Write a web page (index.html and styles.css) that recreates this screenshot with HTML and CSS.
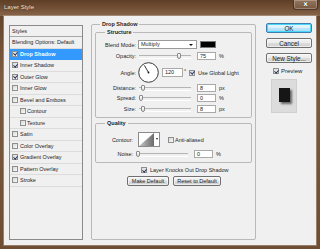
FILE: index.html
```html
<!DOCTYPE html>
<html>
<head>
<meta charset="utf-8">
<title>Layer Style</title>
<link rel="stylesheet" href="styles.css">
</head>
<body>
<div class="window">
  <div class="titlebar">
    <span class="title">Layer Style</span>
    <span class="close">x</span>
  </div>
  <div class="client">
    <div class="list">
      <div class="lhead">Styles</div>
      <div class="row">Blending Options: Default</div>
      <div class="row sel"><span class="cb on"></span>Drop Shadow</div>
      <div class="row"><span class="cb on"></span>Inner Shadow</div>
      <div class="row"><span class="cb on"></span>Outer Glow</div>
      <div class="row"><span class="cb"></span>Inner Glow</div>
      <div class="row"><span class="cb"></span>Bevel and Emboss</div>
      <div class="row sub"><span class="cb"></span>Contour</div>
      <div class="row sub"><span class="cb"></span>Texture</div>
      <div class="row"><span class="cb"></span>Satin</div>
      <div class="row"><span class="cb"></span>Color Overlay</div>
      <div class="row"><span class="cb on"></span>Gradient Overlay</div>
      <div class="row"><span class="cb"></span>Pattern Overlay</div>
      <div class="row"><span class="cb"></span>Stroke</div>
    </div>

    <fieldset class="group outer">
      <legend>Drop Shadow</legend>
      <fieldset class="group inner structure">
        <legend>Structure</legend>
        <div class="frow r-blend">
          <span class="lbl">Blend Mode:</span>
          <div class="select">Multiply<span class="arrow"></span></div>
          <div class="swatch"></div>
        </div>
        <div class="frow r-op">
          <span class="lbl">Opacity:</span>
          <div class="slider"><span class="thumb" style="left:38px"></span></div>
          <span class="num">75</span><span class="unit">%</span>
        </div>
        <div class="frow r-angle">
          <span class="lbl">Angle:</span>
          <svg class="dial" width="21" height="21" viewBox="0 0 21 21">
            <circle cx="10.5" cy="10.5" r="9.8" fill="#fff" stroke="#3a3a3a" stroke-width="1"/>
            <line x1="10.5" y1="10.5" x2="6.3" y2="3.3" stroke="#222" stroke-width="0.9"/>
            <circle cx="10.5" cy="10.5" r="0.9" fill="#111"/>
          </svg>
          <span class="num num-angle">120</span>
          <span class="deg">°</span>
          <span class="cb on"></span>
          <span class="cbtext">Use Global Light</span>
        </div>
        <div class="frow r-dist">
          <span class="lbl">Distance:</span>
          <div class="slider"><span class="thumb" style="left:2px"></span></div>
          <span class="num">8</span><span class="unit">px</span>
        </div>
        <div class="frow r-spread">
          <span class="lbl">Spread:</span>
          <div class="slider"><span class="thumb" style="left:0px"></span></div>
          <span class="num">0</span><span class="unit">%</span>
        </div>
        <div class="frow r-size">
          <span class="lbl">Size:</span>
          <div class="slider"><span class="thumb" style="left:2px"></span></div>
          <span class="num">8</span><span class="unit">px</span>
        </div>
      </fieldset>

      <fieldset class="group inner quality">
        <legend>Quality</legend>
        <div class="frow r-contour">
          <span class="lbl">Contour:</span>
          <div class="contour">
            <svg width="15" height="13" viewBox="0 0 15 13">
              <defs>
                <linearGradient id="cg" x1="0" y1="0" x2="1" y2="0">
                  <stop offset="0" stop-color="#c8c8c8"/>
                  <stop offset="1" stop-color="#6a6a6a"/>
                </linearGradient>
              </defs>
              <polygon points="0,13 15,0 15,13" fill="url(#cg)"/>
            </svg>
            <span class="carrow"></span>
          </div>
          <span class="cb"></span>
          <span class="cbtext">Anti-aliased</span>
        </div>
        <div class="frow r-noise">
          <span class="lbl">Noise:</span>
          <div class="slider"><span class="thumb" style="left:0px"></span></div>
          <span class="num">0</span><span class="unit">%</span>
        </div>
      </fieldset>

      <div class="knock"><span class="cb on"></span><span class="cbtext">Layer Knocks Out Drop Shadow</span></div>
      <div class="btnrow">
        <span class="btn small">Make Default</span>
        <span class="btn small">Reset to Default</span>
      </div>
    </fieldset>

    <div class="side">
      <span class="btn big ok">OK</span>
      <span class="btn big">Cancel</span>
      <span class="btn big">New Style...</span>
      <div class="prevchk"><span class="cb on"></span><span class="cbtext">Preview</span></div>
      <div class="preview"><div class="sq"></div></div>
    </div>
  </div>
</div>
</body>
</html>
```

FILE: styles.css
```css
* { box-sizing: border-box; }
html, body { margin: 0; padding: 0; }
body {
  width: 320px; height: 249px; overflow: hidden;
  font-family: "Liberation Sans", Arial, sans-serif;
  font-size: 5.5px; color: #1e1e1e;
  background: #6a4a30;
}
.window {
  width: 320px; height: 249px;
  display: flex; flex-direction: column;
  background: linear-gradient(180deg, #5f4028 0%, #7c5b40 30%, #6e4d33 100%);
}
.titlebar {
  height: 16px; flex: none;
  display: flex; justify-content: space-between; align-items: flex-start;
  background: linear-gradient(180deg, #5e3e26 0%, #745238 55%, #86664b 100%);
}
.title {
  margin: 4px 0 0 4px;
  font-size: 6px; line-height: 7px; color: #ece4dc;
  text-shadow: 0 0 2px rgba(40,20,5,0.6);
}
.close {
  width: 25px; height: 10px; margin-right: 2px;
  border: 1px solid rgba(35,18,8,0.6); border-top: 0;
  border-radius: 0 0 3px 3px;
  background: linear-gradient(#94765e, #78583f);
  box-shadow: inset 0 0 0 1px rgba(255,255,255,0.25);
  color: #fff; font-family: "DejaVu Sans", sans-serif; font-weight: bold;
  font-size: 7px; line-height: 8px; text-align: center;
  text-shadow: 0 0 1px #000;
}
.client {
  flex: 1;
  margin: 0 4px 4px 4px;
  background: #f0f0f0;
  box-shadow: 0 0 0 1px rgba(230,215,200,0.35);
  display: flex; align-items: flex-start;
  padding: 4px 0 0 5px;
}

/* styles list */
.list {
  width: 74px; height: 215px; margin-top: 5px;
  border: 1px solid #8a8a8a;
  background: #f0f0f0;
  display: flex; flex-direction: column;
}
.lhead {
  height: 11px; flex: none;
  border-bottom: 1px solid #a8a8a8;
  padding-left: 2px; line-height: 10px;
}
.row {
  height: 11.5px; flex: none;
  border-bottom: 1px solid #dcdcdc;
  display: flex; align-items: center;
  padding-left: 2px; white-space: nowrap;
}
.row .cb { margin-right: 2px; }
.row.sub { padding-left: 10px; }
.row.sub .cb { margin-right: 1px; }
.row.sel { background: #3399ff; color: #fff; font-weight: bold; border-bottom-color: #3399ff; }

/* checkbox */
.cb {
  position: relative; flex: none; display: inline-block;
  width: 6px; height: 6px;
  border: 1px solid #8e8f8f;
  background: linear-gradient(135deg, #d6d6d6, #fbfbfb);
}
.cb.on::after {
  content: ""; position: absolute;
  left: 1.3px; top: -0.4px; width: 1.6px; height: 3.2px;
  border: solid #23345e; border-width: 0 1px 1px 0;
  transform: rotate(40deg);
}

/* group boxes */
.group {
  margin: 0; border: 1px solid #b9b9b9; border-radius: 2px;
  min-width: 0;
}
.group > legend {
  font-weight: bold; line-height: 8px; height: 8px; padding: 0 2px;
}
.outer {
  width: 165px; height: 220px; margin-left: 8px;
  padding: 0 3px 0 3px;
}
.outer > legend { margin-left: 5px; }
.inner { padding: 0 0 4px 0; }
.inner > legend { margin-left: 9px; }
.quality { margin-top: 1px; }

.frow { display: flex; align-items: center; height: 8px; white-space: nowrap; }
.lbl { width: 40px; flex: none; text-align: right; }
.quality .lbl { width: 37px; }
.r-blend { margin-top: 4px; height: 9px; }
.r-op { margin-top: 3px; }
.r-angle { margin-top: 2px; height: 21px; }
.r-dist { margin-top: 1px; }
.r-spread { margin-top: 2px; }
.r-size { margin-top: 3px; }
.r-contour { margin-top: 5px; height: 15px; }
.r-noise { margin-top: 3px; }

.select {
  position: relative;
  width: 59px; height: 9px; margin-left: 2px;
  background: #fff; border: 1px solid #9a9a9a;
  padding-left: 2px; line-height: 7px;
}
.arrow {
  position: absolute; right: 3px; top: 2.5px;
  width: 0; height: 0;
  border-left: 2px solid transparent; border-right: 2px solid transparent;
  border-top: 2px solid #111;
}
.swatch {
  width: 16px; height: 7px; margin-left: 3px;
  background: #000; border: 1px solid #777;
}
.slider {
  position: relative; flex: none;
  width: 52px; height: 8px; margin-left: 3px;
}
.slider::before {
  content: ""; position: absolute; left: 0; right: 0; top: 3px;
  height: 2px; border-top: 1px solid #b4b4b4; border-bottom: 1px solid #fff;
}
.thumb {
  position: absolute; top: 1px;
  width: 4px; height: 6px;
  border: 1px solid #8a8a8a; border-radius: 1px 1px 2px 2px;
  background: linear-gradient(#fdfdfd, #dedede);
}
.num {
  flex: none; width: 19px; height: 8px; margin-left: 6px;
  background: #fff; border: 1px solid #a9a9a9;
  padding-left: 2px; line-height: 6px;
}
.unit { margin-left: 3px; }
.dial { flex: none; margin-left: 2px; display: block; }
.num-angle { width: 21px; margin-left: 3px; height: 9px; line-height: 7px; }
.deg { width: 3px; margin-left: 1px; margin-top: -3px; }
.r-angle .cb { margin-left: 2px; }
.cbtext { margin-left: 3px; }
.r-contour .cb { margin-left: 8px; }
.r-contour .cbtext { margin-left: 1px; }
.contour {
  position: relative; flex: none;
  width: 22px; height: 15px; margin-left: 5px;
  background: #fff; border: 1px solid #8a8a8a;
}
.contour svg { display: block; position: absolute; left: 0; top: 0; }
.carrow {
  position: absolute; right: 1px; top: 5px;
  width: 0; height: 0;
  border-left: 1.5px solid transparent; border-right: 1.5px solid transparent;
  border-top: 2px solid #222;
}
.knock {
  display: flex; align-items: center; height: 8px;
  margin-top: 3px; padding-left: 46px; white-space: nowrap;
}
.btnrow { display: flex; gap: 4px; margin-top: 2px; padding-left: 32px; }

/* buttons */
.btn {
  display: flex; align-items: center; justify-content: center;
  height: 10px;
  border: 1px solid #707070; border-radius: 2px;
  background: linear-gradient(#f3f3f3 0%, #ebebeb 50%, #dddddd 51%, #cfcfcf 100%);
  box-shadow: inset 0 0 0 1px rgba(255,255,255,0.6);
  white-space: nowrap; color: #1a1a1a;
}
.btn.small { width: 42px; }
.btn.small + .btn.small { width: 48px; }
.side {
  display: flex; flex-direction: column;
  margin-left: 10px; margin-top: 3px; width: 46px;
}
.btn.big { width: 46px; height: 10px; font-size: 6.3px; margin-bottom: 5px; }
.btn.ok {
  border-color: #3c7fb1;
  background: linear-gradient(#eaf6fd 0%, #d9f0fc 50%, #bee6fd 51%, #a7d9f5 100%);
  box-shadow: inset 0 0 0 1px #48d7f8;
}
.prevchk {
  display: flex; align-items: center; height: 8px;
  margin-top: -1px; padding-left: 7px; font-size: 6px;
}
.prevchk .cbtext { margin-left: 2px; }
.preview {
  width: 26px; height: 34px; margin-top: 4px; margin-left: 5px;
  background: #dcdcdc; border: 1px solid #cfcfcf;
  display: flex; justify-content: center; padding-top: 8px;
}
.sq {
  width: 11px; height: 14px; background: #161616;
  box-shadow: 2px 2px 2px rgba(0,0,0,0.55);
}
```
